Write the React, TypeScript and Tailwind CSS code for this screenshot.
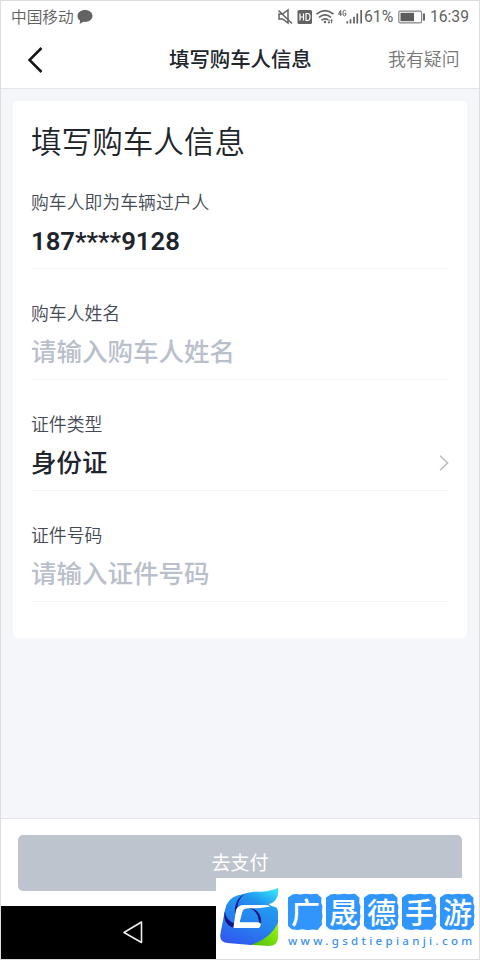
import React from 'react';

const cjk = "font-['Noto_Sans_CJK_SC',sans-serif]";

function StatusBar() {
  return (
    <div className="flex h-[31px] shrink-0 items-center text-[#616161]">
      <span className="ml-[10px] text-[15.700px] leading-[30px] font-[350] whitespace-nowrap">中国移动</span>
      <svg className="ml-[3px] shrink-0" width="16" height="16" viewBox="0 0 16 16" fill="#636363">
        <path d="M8 1C3.700 1 .5 3.500 .5 7c0 2 .9 3.500 2.600 4.600L2.600 15l3.700-2.200c5 .7 9.200-2 9.200-5.800C15.500 3.500 12.300 1 8 1Z" />
      </svg>
      <div className="flex-1" />
      <svg className="shrink-0" width="87" height="20" viewBox="277 6 87 20" fill="none" stroke="#626262" strokeWidth="1.500">
        <path d="M279 13h3.500l5.500-4v13l-5.500-4H279z" />
        <path d="M278.500 9.500 292 22.500" />
        <rect x="297.500" y="9" width="14.500" height="14" rx="1.500" fill="#626262" stroke="none" />
        <path d="M300 12.500v7m0-3.500h3.500m0-3.500v7M306 12.500v7h1.600q2.400 0 2.400-3.500t-2.400-3.500z" stroke="#fff" strokeWidth="1.200" />
        <path d="M316.500 13.200q8.500-7 17 0M319 16.300q6-4.800 12 0M321.500 19.300q3.500-2.700 6.500-.4" strokeWidth="1.700" />
        <circle cx="325" cy="21" r="1.200" fill="#626262" stroke="none" />
        <path d="M329 18.500v3.700m2.600-3.700v3.700M328 21l1 1.200 1-1.200m.6-1.500 1-1 1 1" strokeWidth="1" />
        <path d="M340.700 15V9.300l-2.300 3.900h3.300M346 10.400q-.6-1.100-1.600-1.100-1.500 0-1.500 2.800t1.600 2.800q1.500 0 1.500-2.400h-1.400" strokeWidth="1" />
        <path d="M347.300 20.200v2.400M350.500 18.200v4.400M354 15.800v6.800M357.300 12.500v10.100M361.200 9v13.600" strokeWidth="1.700" />
      </svg>
      <span className="w-[30px] font-[Roboto,sans-serif] text-[15.800px] whitespace-nowrap">61%</span>
      <svg className="ml-[4px] shrink-0" width="28" height="14" viewBox="0 0 28 14" fill="none">
        <rect x=".8" y="1.200" width="22.800" height="11.600" rx="1.500" stroke="#858585" strokeWidth="1.200" />
        <rect x="2.500" y="2.800" width="13.500" height="8.400" fill="#5c5c5c" />
        <path d="M26 3.500v7" stroke="#666" strokeWidth="2" />
      </svg>
      <span className="ml-[4px] mr-[10px] font-[Roboto,sans-serif] text-[15.700px] whitespace-nowrap">16:39</span>
    </div>
  );
}

function Field({ label, children, chevron = false }: { label: string; children: React.ReactNode; chevron?: boolean }) {
  return (
    <div className="h-[111px] border-b border-[#f2f3f4] pt-[30px]">
      <div className="h-[26px] text-[17.850px] leading-[26px] font-[350] text-[#444a54]">{label}</div>
      <div className="mt-[5px] flex h-[40px] items-center justify-between text-[25.500px] leading-[40px] font-medium text-[#1f252d]">
        {children}
        {chevron && (
          <svg className="mt-[3px]" width="10" height="16" viewBox="0 0 10 16" fill="none" stroke="#b8babd" strokeWidth="1.500">
            <path d="m1 .7 7.600 7.300L1 15.300" />
          </svg>
        )}
      </div>
    </div>
  );
}

function SwirlLogo() {
  return (
    <svg className="h-[82px] w-[64px] shrink-0" viewBox="0 -12 192 246">
      <defs>
        <linearGradient id="ring" x1=".7" y1="0" x2=".25" y2="1">
          <stop stopColor="#23a5f4" />
          <stop offset=".5" stopColor="#2585ee" />
          <stop offset="1" stopColor="#3159ee" />
        </linearGradient>
        <linearGradient id="wing" x1="0" y1="1" x2="1" y2="0">
          <stop stopColor="#2474ed" />
          <stop offset=".45" stopColor="#2196ef" />
          <stop offset="1" stopColor="#36f0fc" />
        </linearGradient>
        <linearGradient id="leaf" x1="0" y1="1" x2="1" y2="0">
          <stop stopColor="#48b90d" />
          <stop offset="1" stopColor="#a2ff08" />
        </linearGradient>
      </defs>
      <path d="M100 188Q166 166 186 112V167Q185 192 158 192Z" fill="url(#leaf)" />
      <path d="M66 40Q34 48 27 84L13 157Q10 179 34 183L104 189Q164 170 186 122V91Q186 73 168 73L158 66 80 60 85 36Z" fill="url(#ring)" />
      <path d="M82 36Q101 28 136 29Q169 26 186 17Q190 51 168 63Q158 69 88 69Q69 69 61 85Q59 55 82 36Z" fill="url(#wing)" />
      <path d="M85 35Q53 53 57 98L65 80Q62 56 85 35Z" fill="#10188a" />
      <path d="M26 88Q31 119 58 125L53 138Q20 127 26 88Z" fill="#101580" />
      <path d="M98 78Q133 79 136 121L129 123Q128 86 98 78Z" fill="#101580" />
      <path d="M60 84Q66 69 84 69H140Q153 68 164 73Q145 79 98 79Q83 79 79 89L71 121H125Q137 122 133 133L129 138H52Z" fill="#fff" />
    </svg>
  );
}

function Watermark() {
  return (
    <div className="absolute top-[877px] left-[215px] flex h-[82px] w-[264px] bg-white">
      <SwirlLogo />
      <div className="pt-[15px] pl-[8px]">
        <div className="flex gap-[3px]">
          {['广', '晟', '德', '手', '游'].map((c) => (
            <div key={c} className="relative flex h-[37px] w-[35px] items-center justify-center">
              <svg className="absolute inset-0" width="35" height="37" viewBox="0 0 35 37">
                <path fill="#3096fb" d="M5 1.200 9 1l3 .5L18 .8l5 .5 6-.6 4.500 4-.3 5 1.300 4-.6 5 .6 5-.8 4 .3 4-4.500 5.200-5-.4-5 .6-5-.8-5 .6-6-.6-4.500-4.500 .6-5-.7-5 .7-5-.7-5 .6-7Z" />
              </svg>
              <span className="relative -top-[1px] text-[29px] leading-[36px] font-medium text-white">{c}</span>
            </div>
          ))}
        </div>
        <div className="mt-[2px] font-['Noto_Sans',sans-serif] text-[11.500px] leading-[18px] font-medium tracking-[3.300px] whitespace-nowrap text-[#3b91e8]">
          www.gsdtiepianji.com
        </div>
      </div>
    </div>
  );
}

export default function App() {
  return (
    <div className={`relative flex h-[960px] w-[480px] flex-col overflow-hidden border border-[#dcdde0] bg-[#f5f6fa] ${cjk}`}>
      <header className="h-[88px] shrink-0 border-b border-[#e3e4e8] bg-white">
        <StatusBar />
        <div className="flex h-[54px] items-center">
          <svg className="mt-[2px] ml-[26px] shrink-0" width="16" height="28" viewBox="0 0 16 28" fill="none" stroke="#15171a" strokeWidth="2.500">
            <path d="M14.500 2 2.500 14l12 12" />
          </svg>
          <h1 className="-mt-[2px] ml-[126px] w-[143px] text-[20.400px] leading-[30px] font-medium whitespace-nowrap text-[#20252c]">填写购车人信息</h1>
          <button className="-mt-[2px] ml-[76px] text-[17.900px] leading-[28px] font-[350] whitespace-nowrap text-[#777]">我有疑问</button>
        </div>
      </header>
      <main className="flex-1 px-[12px] pt-[12px]">
        <section className="h-[537px] rounded-[5px] bg-white px-[18px] pt-[17px]">
          <h2 className="h-[40px] text-[30.600px] leading-[44px] font-[350] text-[#20252c]">填写购车人信息</h2>
          <Field label="购车人即为车辆过户人">
            <span className="pt-[3px] font-[Roboto,sans-serif] text-[25.700px] font-semibold">187****9128</span>
          </Field>
          <Field label="购车人姓名"><span className="text-[#b9c0cb]">请输入购车人姓名</span></Field>
          <Field label="证件类型" chevron><span>身份证</span></Field>
          <Field label="证件号码"><span className="text-[#b9c0cb]">请输入证件号码</span></Field>
        </section>
      </main>
      <footer className="h-[88px] shrink-0 border-t border-[#e4e5e8] bg-white px-[17px] pt-[16px]">
        <button className="h-[56px] w-full rounded-[5px] bg-[#bec4ce] pb-[2px] text-[19px] text-white">去支付</button>
      </footer>
      <nav className="-mx-px h-[53px] shrink-0 bg-black pt-[15px] pl-[123px]">
        <svg width="20" height="23" viewBox="0 0 20 23" fill="none" stroke="#ededed" strokeWidth="1.600" strokeLinejoin="round">
          <path d="M18.500 1v20.500L1 11.500Z" />
        </svg>
      </nav>
      <Watermark />
    </div>
  );
}
